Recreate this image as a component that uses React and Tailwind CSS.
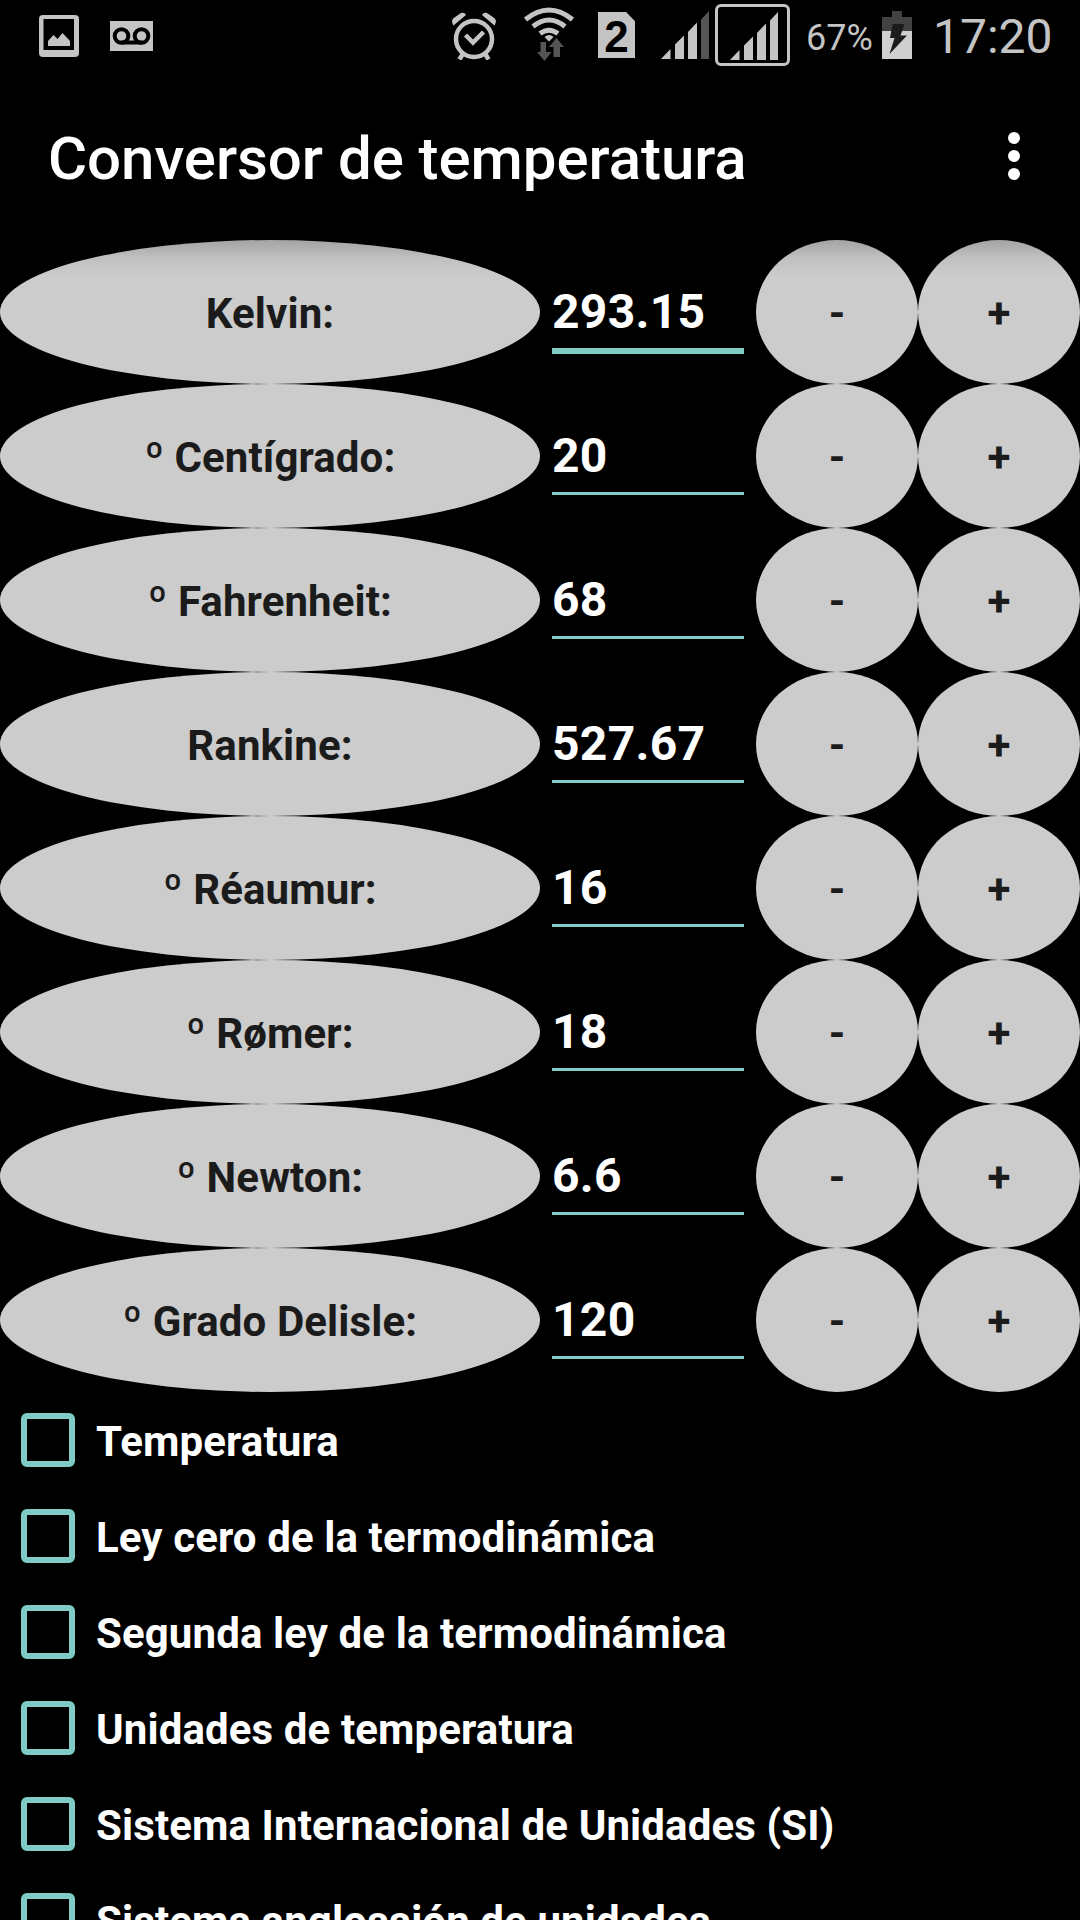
/**
 * Temperature converter screen
 */
import { useState } from 'react';

const UNITS = [
  { label: 'Kelvin:', value: '293.15' },
  { label: 'º Centígrado:', value: '20' },
  { label: 'º Fahrenheit:', value: '68' },
  { label: 'Rankine:', value: '527.67' },
  { label: 'º Réaumur:', value: '16' },
  { label: 'º Rømer:', value: '18' },
  { label: 'º Newton:', value: '6.6' },
  { label: 'º Grado Delisle:', value: '120' },
];

const TOPICS = [
  'Temperatura',
  'Ley cero de la termodinámica',
  'Segunda ley de la termodinámica',
  'Unidades de temperatura',
  'Sistema Internacional de Unidades (SI)',
  'Sistema anglosajón de unidades',
];

const ImageIcon = () => (
  <svg className="h-[42px] w-10" viewBox="0 0 40 42">
    <path
      fill="#c4c4c4"
      fillRule="evenodd"
      d="M4 0h32a4 4 0 0 1 4 4v34a4 4 0 0 1-4 4H4a4 4 0 0 1-4-4V4a4 4 0 0 1 4-4zM4.500 4v31h30.500V4z"
    />
    <path fill="#c4c4c4" d="M9 31v-5l5.500-6 4 4 5-6 7.500 8v5z" />
  </svg>
);

const VoicemailIcon = () => (
  <svg className="h-[30px] w-[43px]" viewBox="0 0 43 30">
    <path fill="#c4c4c4" d="M0 0h43v30H0z" />
    <g fill="none" stroke="#000" strokeWidth="4">
      <circle cx="11.500" cy="15" r="6.800" />
      <circle cx="31.500" cy="15" r="6.800" />
      <path d="M11 21.500h21" />
    </g>
  </svg>
);

const AlarmIcon = () => (
  <svg className="h-12 w-11" viewBox="0 0 44 48">
    <g fill="none" stroke="#c4c4c4">
      <circle cx="22" cy="27" r="18" strokeWidth="4.500" />
      <path strokeWidth="4.500" d="M13.500 23l7.500 7.500 10.500-10.500" />
      <path strokeWidth="4.500" d="M11 41.500l-3.500 6M33 41.500l3.500 6" />
    </g>
    <path
      fill="#c4c4c4"
      d="M1.500 13.500C-1 9 0 7.500 2.500 5.500l5-3.500c3-2 5-1.500 6.500 1zM42.500 13.500c2.500-4.500 1.500-6-1-8l-5-3.500c-3-2-5-1.500-6.500 1z"
    />
  </svg>
);

const WifiIcon = () => (
  <svg className="h-[54px] w-[50px]" viewBox="0 0 50 54">
    <g fill="none" stroke="#c4c4c4" strokeWidth="5">
      <path d="M1.500 12.500Q25-6.500 48.500 12.500" />
      <path d="M9 19.500Q25 6.500 41 19.500" />
      <path d="M16 26.500Q25 20 34 26.500" />
    </g>
    <path fill="#c4c4c4" d="M20.500 30q4.500-4 9 0L25 34.500z" />
    <path fill="#555" d="M16.500 35H22v10h5.500L20.500 54l-7.500-9h3.500zM29.500 50V40H25l7.500-9 7.500 9h-4v10z" />
  </svg>
);

const SimIcon = () => (
  <div className="flex h-[46px] w-[37px] items-center justify-center bg-[#c4c4c4] pt-1 font-['Liberation_Sans'] text-[44px] leading-none font-bold text-black [clip-path:polygon(0_0,76%_0,100%_20%,100%_100%,0_100%)]">
    2
  </div>
);

const SignalIcon = ({ weak }) => (
  <svg className="h-12 w-12" viewBox="0 0 48 48">
    <path fill="#c4c4c4" d="M0 48L9.500 38v10zM14 48V33.500l9-9V48zM27 48V21l9-9.500V48z" />
    <path fill={weak ? '#555' : '#c4c4c4'} d="M40 48V8.500L48 0v48z" />
  </svg>
);

const BatteryIcon = () => (
  <svg className="h-12 w-[30px]" viewBox="0 0 30 48">
    <path fill="#424242" d="M10 0h10v6h10v14H0V6h10z" />
    <path fill="#cfcfcf" d="M0 20h30v28H0z" />
    <path fill="#1c1c1c" d="M10.500 13h12l-4 11.500h6.500L7.500 43l5-16H8z" />
  </svg>
);

const StatusBar = () => (
  <div className="flex h-[75px] text-[#c4c4c4]">
    <div className="mt-[15px] ml-[39px]"><ImageIcon /></div>
    <div className="mt-[21px] ml-[31px]"><VoicemailIcon /></div>
    <div className="mt-3 ml-[299px]"><AlarmIcon /></div>
    <div className="mt-[7px] ml-7"><WifiIcon /></div>
    <div className="mt-3 ml-6"><SimIcon /></div>
    <div className="mt-[11px] ml-[26px]"><SignalIcon weak /></div>
    <div className="mt-1 ml-1.5 h-[62px] w-[75px] rounded-md border-3 border-[#c4c4c4] pt-[5px] pl-3">
      <SignalIcon />
    </div>
    <div className="mt-[17px] ml-4 w-[76px] text-[36px] leading-[42px] whitespace-nowrap">67%</div>
    <div className="mt-[11px]"><BatteryIcon /></div>
    <div className="mt-[9px] ml-[21px] text-[48px] leading-[56px]">17:20</div>
  </div>
);

const TitleBar = () => (
  <div className="flex h-[165px] items-start justify-between pt-12 pr-[60px] pl-12">
    <h1 className="text-[60px] leading-[72px] font-medium tracking-[-0.05px] whitespace-nowrap text-white">
      Conversor de temperatura
    </h1>
    <div className="mt-[9px] flex w-3 flex-col gap-1.5">
      <span className="h-3 w-3 rounded-full bg-white" />
      <span className="h-3 w-3 rounded-full bg-white" />
      <span className="h-3 w-3 rounded-full bg-white" />
    </div>
  </div>
);

const OvalButton = ({ children, onClick }) => (
  <button
    onClick={onClick}
    className="flex h-36 items-center justify-center rounded-[50%] bg-[#cccccc] pt-0.5 text-[42px] font-bold tracking-[0.1px] whitespace-pre text-[#1b1b1b]"
  >
    {children}
  </button>
);

const UnitRow = ({ label, value, active, onFocus }) => (
  <div className="grid h-36 grid-cols-[540px_216px_162px_162px]">
    <OvalButton onClick={onFocus}>{label}</OvalButton>
    <div className="px-3 pt-11" onClick={onFocus}>
      <div
        className={
          active
            ? 'h-[70px] border-b-6 border-[#80cbc4] text-[48px] leading-[56px] font-bold tracking-[0.3px] text-white'
            : 'h-[67px] border-b-3 border-[#80cbc4] text-[48px] leading-[56px] font-bold tracking-[0.3px] text-white'
        }
      >
        {value}
      </div>
    </div>
    <OvalButton>-</OvalButton>
    <OvalButton>+</OvalButton>
  </div>
);

const TopicRow = ({ label }) => (
  <label className="flex h-24 shrink-0 items-center gap-[21px] pl-[21px]">
    <span className="h-[54px] w-[54px] rounded-md border-6 border-[#80cbc4]" />
    <span className="pt-1 text-[42px] leading-[50px] font-bold tracking-[0.11px] whitespace-nowrap text-white">{label}</span>
  </label>
);

const App = () => {
  const [activeUnit, setActiveUnit] = useState(0);

  return (
    <div className="h-[1920px] w-[1080px] overflow-hidden bg-black font-[Roboto,sans-serif]">
      <StatusBar />
      <TitleBar />

      <div className="relative">
        {/* Toolbar shadow */}
        <div className="pointer-events-none absolute inset-x-0 top-0 h-9 bg-linear-to-b from-black/20 via-black/6 to-transparent" />
        {UNITS.map((unit, i) => (
          <UnitRow
            key={unit.label}
            label={unit.label}
            value={unit.value}
            active={i === activeUnit}
            onFocus={() => setActiveUnit(i)}
          />
        ))}
      </div>

      <div className="flex flex-col">
        {TOPICS.map((topic) => (
          <TopicRow key={topic} label={topic} />
        ))}
      </div>
    </div>
  );
};

export default App;
